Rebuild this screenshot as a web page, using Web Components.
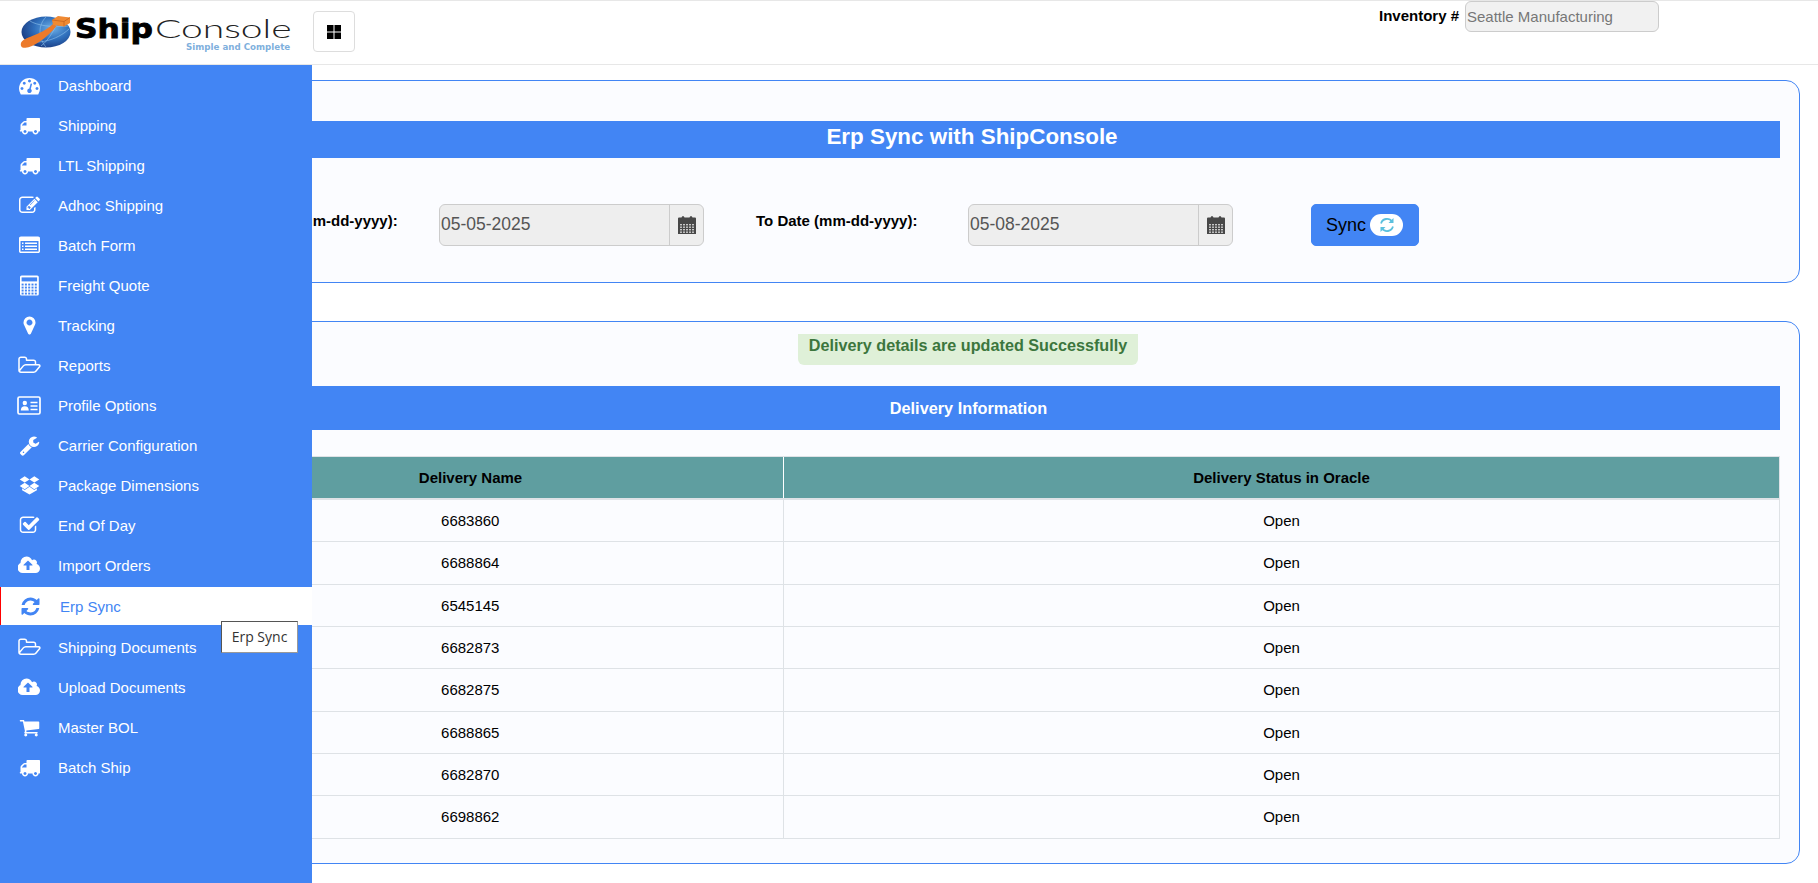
<!DOCTYPE html>
<html>
<head>
<meta charset="utf-8">
<title>ShipConsole</title>
<style>
html,body{margin:0;padding:0;height:100%;background:#fff;font-family:"Liberation Sans",Arial,sans-serif;color:#000;}
</style>
</head>
<body>
<sc-app>
  <sc-header slot="header"></sc-header>
  <sc-sidebar slot="sidebar">
    <sc-nav-item icon="dashboard">Dashboard</sc-nav-item>
    <sc-nav-item icon="truck">Shipping</sc-nav-item>
    <sc-nav-item icon="truck">LTL Shipping</sc-nav-item>
    <sc-nav-item icon="edit">Adhoc Shipping</sc-nav-item>
    <sc-nav-item icon="listalt">Batch Form</sc-nav-item>
    <sc-nav-item icon="calculator">Freight Quote</sc-nav-item>
    <sc-nav-item icon="marker">Tracking</sc-nav-item>
    <sc-nav-item icon="folder">Reports</sc-nav-item>
    <sc-nav-item icon="idcard">Profile Options</sc-nav-item>
    <sc-nav-item icon="wrench">Carrier Configuration</sc-nav-item>
    <sc-nav-item icon="dropbox">Package Dimensions</sc-nav-item>
    <sc-nav-item icon="check">End Of Day</sc-nav-item>
    <sc-nav-item icon="cloud">Import Orders</sc-nav-item>
    <sc-nav-item icon="refresh" active tip="Erp Sync">Erp Sync</sc-nav-item>
    <sc-nav-item icon="folder">Shipping Documents</sc-nav-item>
    <sc-nav-item icon="cloud">Upload Documents</sc-nav-item>
    <sc-nav-item icon="cart">Master BOL</sc-nav-item>
    <sc-nav-item icon="truck">Batch Ship</sc-nav-item>
  </sc-sidebar>
  <sc-sync-card></sc-sync-card>
  <sc-delivery-card></sc-delivery-card>
</sc-app>

<script>
const FA = {
  dashboard:['0 0 1792 1792','M384 1152q0-53-37.5-90.5t-90.5-37.5-90.5 37.5-37.5 90.5 37.5 90.5 90.5 37.5 90.5-37.5 37.5-90.5zm192-448q0-53-37.5-90.5t-90.5-37.5-90.5 37.5-37.5 90.5 37.5 90.5 90.5 37.5 90.5-37.5 37.5-90.5zm428 481l101-382q6-26-7.5-48.5t-38.5-29.5-48 6.5-30 39.5l-101 382q-60 5-107 43.5t-63 98.5q-20 77 20 146t117 89 146-20 89-117q16-60-6-117t-72-91zm660-33q0-53-37.5-90.5t-90.5-37.5-90.5 37.5-37.5 90.5 37.5 90.5 90.5 37.5 90.5-37.5 37.5-90.5zm-640-640q0-53-37.5-90.5t-90.5-37.5-90.5 37.5-37.5 90.5 37.5 90.5 90.5 37.5 90.5-37.5 37.5-90.5zm448 192q0-53-37.5-90.5t-90.5-37.5-90.5 37.5-37.5 90.5 37.5 90.5 90.5 37.5 90.5-37.5 37.5-90.5zm320 448q0 261-141 483-19 29-54 29h-1402q-35 0-54-29-141-221-141-483 0-182 71-348t191-286 286-191 348-71 348 71 286 191 191 286 71 348z'],
  truck:['0 0 1792 1792','M640 1408q0-52-38-90t-90-38-90 38-38 90 38 90 90 38 90-38 38-90zm-384-512h384v-256h-158q-13 0-22 9l-195 195q-9 9-9 22v30zm1280 512q0-52-38-90t-90-38-90 38-38 90 38 90 90 38 90-38 38-90zm256-1088v1024q0 15-4 26.5t-13.5 18.5-16.5 11.5-23.5 6-22.5 2-25.5 0-22.5-.5q0 106-75 181t-181 75-181-75-75-181h-384q0 106-75 181t-181 75-181-75-75-181h-64q-3 0-22.5.5t-25.5 0-22.5-2-23.5-6-16.5-11.5-13.5-18.5-4-26.5q0-26 19-45t45-19v-320q0-8-.5-35t0-38 2.5-34.5 6.5-37 14-30.5 22.5-30l198-198q19-19 50.5-32t58.5-13h160v-192q0-26 19-45t45-19h1024q26 0 45 19t19 45z'],
  edit:['0 0 1792 1792','M888 1184l116-116-152-152-116 116v56h96v96h56zm440-720q-16-16-33 1l-350 350q-17 17-1 33t33-1l350-350q17-17 1-33zm80 594v190q0 119-84.5 203.5t-203.5 84.5h-832q-119 0-203.5-84.5t-84.5-203.5v-832q0-119 84.5-203.5t203.5-84.5h832q63 0 117 25 15 7 18 23 3 17-9 29l-49 49q-14 14-32 8-23-6-45-6h-832q-66 0-113 47t-47 113v832q0 66 47 113t113 47h832q66 0 113-47t47-113v-126q0-13 9-22l64-64q15-15 35-7t20 29zm-96-738l288 288-672 672h-288v-288zm444 132l-92 92-288-288 92-92q28-28 68-28t68 28l152 152q28 28 28 68t-28 68z'],
  listalt:['0 0 1792 1792','M384 1184v64q0 13-9.5 22.5t-22.5 9.5h-64q-13 0-22.5-9.5t-9.5-22.5v-64q0-13 9.5-22.5t22.5-9.5h64q13 0 22.5 9.5t9.5 22.5zm0-256v64q0 13-9.5 22.5t-22.5 9.5h-64q-13 0-22.5-9.5t-9.5-22.5v-64q0-13 9.5-22.5t22.5-9.5h64q13 0 22.5 9.5t9.5 22.5zm0-256v64q0 13-9.5 22.5t-22.5 9.5h-64q-13 0-22.5-9.5t-9.5-22.5v-64q0-13 9.5-22.5t22.5-9.5h64q13 0 22.5 9.5t9.5 22.5zm1152 512v64q0 13-9.5 22.5t-22.5 9.5h-960q-13 0-22.5-9.5t-9.5-22.5v-64q0-13 9.5-22.5t22.5-9.5h960q13 0 22.5 9.5t9.5 22.5zm0-256v64q0 13-9.5 22.5t-22.5 9.5h-960q-13 0-22.5-9.5t-9.5-22.5v-64q0-13 9.5-22.5t22.5-9.5h960q13 0 22.5 9.5t9.5 22.5zm0-256v64q0 13-9.5 22.5t-22.5 9.5h-960q-13 0-22.5-9.5t-9.5-22.5v-64q0-13 9.5-22.5t22.5-9.5h960q13 0 22.5 9.5t9.5 22.5zm128 704v-832q0-13-9.5-22.5t-22.5-9.5h-1472q-13 0-22.5 9.5t-9.5 22.5v832q0 13 9.5 22.5t22.5 9.5h1472q13 0 22.5-9.5t9.5-22.5zm128-1088v1088q0 66-47 113t-113 47h-1472q-66 0-113-47t-47-113v-1088q0-66 47-113t113-47h1472q66 0 113 47t47 113z'],
  marker:['0 0 1792 1792','M1152 640q0-106-75-181t-181-75-181 75-75 181 75 181 181 75 181-75 75-181zm256 0q0 109-33 179l-364 774q-16 33-47.5 52t-67.5 19-67.5-19-46.5-52l-365-774q-33-70-33-179 0-212 150-362t362-150 362 150 150 362z'],
  folder:['0 0 1920 1792','M1781 931q0-35-53-35h-1088q-40 0-85.5 21.5t-71.5 52.5l-294 363q-18 24-18 40 0 35 53 35h1088q40 0 86-22t71-53l294-363q18-22 18-39zm-1141-163h768v-160q0-40-28-68t-68-28h-576q-40 0-68-28t-28-68v-64q0-40-28-68t-68-28h-320q-40 0-68 28t-28 68v853l256-315q44-53 116-87.5t140-34.5zm1269 163q0 62-46 120l-295 363q-43 53-116 87.5t-140 34.5h-1088q-92 0-158-66t-66-158v-960q0-92 66-158t158-66h320q92 0 158 66t66 158v32h544q92 0 158 66t66 158v160h192q54 0 99 24.5t67 70.5q15 32 15 68z'],
  wrench:['0 0 1792 1792','M448 1472q0-26-19-45t-45-19-45 19-19 45 19 45 45 19 45-19 19-45zm644-420l-682 682q-37 37-90 37-52 0-91-37l-106-108q-38-36-38-90 0-53 38-91l681-681q39 98 114.5 173.5t173.5 114.5zm634-435q0 39-23 106-47 134-164.5 217.5t-258.5 83.5q-185 0-316.5-131.5t-131.5-316.5 131.5-316.5 316.5-131.5q58 0 121.5 16.5t107.5 46.5q16 11 16 28t-16 28l-293 169v224l193 107q5-3 79-48.5t135.5-81 70.5-35.5q15 0 23.5 10t8.5 25z'],
  check:['0 0 1792 1792','M1472 930v318q0 119-84.5 203.5t-203.5 84.5h-832q-119 0-203.5-84.5t-84.5-203.5v-832q0-119 84.5-203.5t203.5-84.5h832q63 0 117 25 15 7 18 23 3 17-9 29l-49 49q-10 10-23 10-3 0-9-2-23-6-45-6h-832q-66 0-113 47t-47 113v832q0 66 47 113t113 47h832q66 0 113-47t47-113v-254q0-13 9-22l64-64q10-10 23-10 6 0 12 3 20 8 20 29zm231-489l-814 814q-24 24-57 24t-57-24l-430-430q-24-24-24-57t24-57l110-110q24-24 57-24t57 24l263 263 647-647q24-24 57-24t57 24l110 110q24 24 24 57t-24 57z'],
  cloud:['0 0 1920 1792','M1216 864q0-14-9-23l-352-352q-9-9-23-9t-23 9l-351 351q-10 12-10 24 0 14 9 23t23 9h224v352q0 13 9.5 22.5t22.5 9.5h192q13 0 22.5-9.5t9.5-22.5v-352h224q13 0 22.5-9.5t9.5-22.5zm640 288q0 159-112.5 271.5t-271.5 112.5h-1088q-185 0-316.5-131.5t-131.5-316.5q0-130 70-240t188-165q-2-30-2-43 0-212 150-362t362-150q156 0 285.5 87t188.5 231q71-62 166-62 106 0 181 75t75 181q0 76-41 138 130 31 213.5 135.5t83.5 238.5z'],
  refresh:['0 0 1792 1792','M1639 1056q0 5-1 7-64 268-268 434.5t-478 166.5q-146 0-282.5-55t-243.5-157l-129 129q-19 19-45 19t-45-19-19-45v-448q0-26 19-45t45-19h448q26 0 45 19t19 45-19 45l-137 137q71 66 161 102t187 36q134 0 250-65t186-179q11-17 53-117 8-23 30-23h192q13 0 22.5 9.5t9.5 22.5zm25-800v448q0 26-19 45t-45 19h-448q-26 0-45-19t-19-45 19-45l138-138q-148-137-349-137-134 0-250 65t-186 179q-11 17-53 117-8 23-30 23h-199q-13 0-22.5-9.5t-9.5-22.5v-7q65-268 270-434.5t480-166.5q146 0 284 55.5t245 156.5l130-129q19-19 45-19t45 19 19 45z'],
  cart:['0 0 1792 1792','M704 1536q0 52-38 90t-90 38-90-38-38-90 38-90 90-38 90 38 38 90zm896 0q0 52-38 90t-90 38-90-38-38-90 38-90 90-38 90 38 38 90zm128-1088v512q0 24-16.5 42.5t-40.5 21.5l-1044 122q13 60 13 70 0 16-24 64h920q26 0 45 19t19 45-19 45-45 19h-1024q-26 0-45-19t-19-45q0-11 8-31.5t16-36 21.5-40 15.5-29.5l-177-823h-204q-26 0-45-19t-19-45 19-45 45-19h256q16 0 28.5 6.5t19.5 15.5 13 24.5 8 26 5.5 29.5 4.5 26h1201q26 0 45 19t19 45z']
}

function faIcon(name, w, h){
  const [box, d] = FA[name]
  return `<svg width="${w}" height="${h}" viewBox="${box}" fill="currentColor" aria-hidden="true"><path d="${d}"/></svg>`
}

function calculatorIcon(){
  let keys = ''
  for(let r = 0; r < 4; r++){
    for(let c = 0; c < 5; c++){
      keys += `<rect x="${2.6 + c*3.3}" y="${8.6 + r*3}" width="2" height="1.9" fill="#4285f4"/>`
    }
  }
  return `<svg width="21" height="21" viewBox="0 0 21 21" aria-hidden="true"><rect x="1" y="0.5" width="18.8" height="20" rx="1.6" fill="#fff"/><rect x="2.6" y="2.4" width="15.5" height="4" fill="#4285f4"/>${keys}</svg>`
}

function idCardIcon(){
  return `<svg width="24" height="19" viewBox="0 0 24 19" aria-hidden="true"><rect x="1" y="1" width="22" height="17" rx="1.5" fill="none" stroke="#fff" stroke-width="1.7"/><circle cx="7.8" cy="7" r="2.2" fill="#fff"/><path d="M3.8 14.6c0-3 1.4-4.4 4-4.4s4 1.4 4 4.4z" fill="#fff"/><path d="M13.5 6.5h7M13.5 10h7M13.5 13.5h7" stroke="#fff" stroke-width="1.3"/></svg>`
}

function dropboxIcon(){
  return `<svg width="21" height="21" viewBox="0 0 21 21" fill="#fff" aria-hidden="true"><path d="M5.7 1.2l4.8 3.2-4.8 3.2L.7 4.4zM15.3 1.2l5 3.2-5 3.2-4.8-3.2zM5.7 7.8l4.8 3.2-4.8 3.2L.7 11zM15.3 7.800l5 3.2-5 3.2-4.8-3.2zM10.5 11.8l4.8 3.1 2.6-1.6v1.9l-7.4 4.4-7.4-4.4v-1.9l2.6 1.6z"/></svg>`
}

function calendarIcon(){
  let dots = ''
  for(let r = 0; r < 4; r++){
    for(let c = 0; c < 5; c++){
      dots += `<rect x="${2 + c*3}" y="${8 + r*2.5}" width="2" height="1.4" fill="#c9c9c9"/>`
    }
  }
  return `<svg width="18" height="18" viewBox="0 0 18 18" aria-hidden="true"><path d="M0 2.5q0-1 1-1h2.5q.5-1.5 1.5-1.5t1.5 1.5h5q.5-1.5 1.5-1.5t1.5 1.5H17q1 0 1 1V18H0z" fill="#484848"/>${dots}</svg>`
}

function thinSyncIcon(){
  return `<svg width="18" height="18" viewBox="0 0 20 20" fill="none" stroke="#5bc0de" stroke-width="2" aria-hidden="true"><g><path d="M15.6 6.3A6.800 6.800 0 0 0 3.4 8.2"/><path d="M17.2 2.2v5.5h-5.500z" fill="#5bc0de" stroke="none"/></g><g transform="rotate(180 10 10)"><path d="M15.6 6.3A6.800 6.800 0 0 0 3.4 8.2"/><path d="M17.2 2.2v5.5h-5.500z" fill="#5bc0de" stroke="none"/></g></svg>`
}

function navIcon(name){
  if(name == 'calculator') return calculatorIcon()
  if(name == 'idcard') return idCardIcon()
  if(name == 'dropbox') return dropboxIcon()
  if(name == 'folder' || name == 'cloud') return faIcon(name, 23, 21)
  return faIcon(name, 21, 21)
}

window.customElements.define('sc-app', class extends HTMLElement {
  constructor(){
    super()
    this.attachShadow({mode:'open'})
  }
  connectedCallback(){
    this.shadowRoot.innerHTML = `
    <style>
      :host{display:block;position:relative;height:883px;overflow:hidden;background:#fff;}
      .main{display:flex;flex-direction:column;gap:38px;padding:15px 18px 0 140px;}
      ::slotted(sc-sidebar){position:absolute;top:65px;left:0;bottom:0;width:312px;}
    </style>
    <slot name="header"></slot>
    <slot name="sidebar"></slot>
    <div class="main"><slot></slot></div>
    `
  }
})

window.customElements.define('sc-logo', class extends HTMLElement {
  constructor(){
    super()
    this.attachShadow({mode:'open'})
  }
  connectedCallback(){
    this.shadowRoot.innerHTML = `
    <style>
      :host{display:block;position:relative;width:272px;height:40px;}
      svg{position:absolute;left:0;top:0;}
      .ship,.console{position:absolute;white-space:nowrap;transform-origin:0 50%;}
      .ship{left:55px;top:2px;font:700 27px/26px "DejaVu Sans",sans-serif;color:#000;-webkit-text-stroke:.8px #000;transform:scaleX(1.16);}
      .console{left:135px;top:1px;font:300 26px/26px Lato,sans-serif;color:#222;transform:scaleX(1.5);}
      small{position:absolute;left:166px;top:29px;white-space:nowrap;font:700 8.7px/9px "DejaVu Sans",sans-serif;color:#7fb0dd;}
    </style>
    <svg width="54" height="40" viewBox="0 0 54 40" aria-hidden="true">
      <defs>
        <radialGradient id="gl" cx="62%" cy="38%" r="65%">
          <stop offset="0" stop-color="#6fb0e6"/>
          <stop offset=".55" stop-color="#2f6fbc"/>
          <stop offset="1" stop-color="#1c3f85"/>
        </radialGradient>
      </defs>
      <ellipse cx="26" cy="18" rx="24.5" ry="15.5" fill="url(#gl)"/>
      <path d="M6 27C18 30 36 27 49 15M26 3c-8 8-8 21 0 30M39 5c-4 9-9 20-18 27M10 7c6 4 22 7 38 5" fill="none" stroke="#8fc2ec" stroke-width=".6"/>
      <path d="M1 29C3 23 20 22 33 10l3.5 2C26 25 13 33 5.5 33.8 2 34.2 .2 32.5 1 29z" fill="#ec7a2a"/>
      <path d="M32 6l6-4 12 1.5V9l-6 3.5L33 11z" fill="#f08a33"/>
      <path d="M32 6l12 1.5v5M44 7.5L50 3.5" fill="none" stroke="#c8651e" stroke-width=".8"/>
    </svg>
    <span class="ship">Ship</span>
    <span class="console">Console</span>
    <small>Simple and Complete</small>
    `
  }
})

window.customElements.define('sc-header', class extends HTMLElement {
  constructor(){
    super()
    this.attachShadow({mode:'open'})
  }
  connectedCallback(){
    this.shadowRoot.innerHTML = `
    <style>
      :host{display:flex;box-sizing:border-box;height:65px;border-top:1px solid #e7e7e7;border-bottom:1px solid #e7e7e7;background:#fff;padding-right:159px;}
      sc-logo{margin:13px 0 0 20px;}
      button{box-sizing:border-box;width:42px;height:41px;margin:10px 0 0 21px;padding:0;background:#fff;border:1px solid #ddd;border-radius:4px;display:flex;align-items:center;justify-content:center;color:#000;}
      .inv{margin-left:auto;display:flex;align-items:flex-start;gap:6px;font:700 15px "Liberation Sans",Arial,sans-serif;}
      .inv label{line-height:29px;}
      .inv div{box-sizing:border-box;width:194px;height:31px;background:#f1f1f1;border:1px solid #ccc;border-radius:6px;padding:0 1px;font:400 15px/30px "Liberation Sans",Arial,sans-serif;color:#777;}
    </style>
    <sc-logo></sc-logo>
    <button aria-label="menu"><svg width="14" height="14" viewBox="0 0 14 14" fill="currentColor"><rect width="6.5" height="6.5"/><rect x="7.5" width="6.5" height="6.5"/><rect y="7.5" width="6.5" height="6.5"/><rect x="7.5" y="7.5" width="6.5" height="6.5"/></svg></button>
    <div class="inv"><label>Inventory #</label><div>Seattle Manufacturing</div></div>
    `
  }
})

window.customElements.define('sc-sidebar', class extends HTMLElement {
  constructor(){
    super()
    this.attachShadow({mode:'open'})
  }
  connectedCallback(){
    this.shadowRoot.innerHTML = `
    <style>
      :host{display:block;background:#4285f4;box-sizing:border-box;z-index:5;}
    </style>
    <slot></slot>
    `
  }
})

window.customElements.define('sc-nav-item', class extends HTMLElement {
  constructor(){
    super()
    this.attachShadow({mode:'open'})
  }
  connectedCallback(){
    const tip = this.getAttribute('tip')
    this.shadowRoot.innerHTML = `
    <style>
      :host{display:block;position:relative;height:40px;color:#fff;font:400 15px "Liberation Sans",Arial,sans-serif;}
      .row{display:flex;align-items:center;height:40px;box-sizing:border-box;}
      .ico{width:24px;margin-left:17px;margin-right:17px;display:flex;justify-content:center;align-items:center;height:24px;}
      :host([active]) .row{height:38px;margin-top:2px;background:#fff;color:#4285f4;border-left:1px solid #f00;}
      :host([active]) .ico{margin-left:17px;margin-right:18px;}
      .tip{position:absolute;left:221px;top:34px;box-sizing:border-box;width:77px;height:32px;background:#fff;border:1px solid #555;border-right-color:#999;border-bottom-color:#999;color:#333;font:400 14px/30px "Open Sans",sans-serif;text-align:center;white-space:nowrap;z-index:6;}
    </style>
    <div class="row"><span class="ico">${navIcon(this.getAttribute('icon'))}</span><slot></slot></div>
    ${tip ? `<div class="tip">${tip}</div>` : ''}
    `
  }
})

window.customElements.define('sc-date-field', class extends HTMLElement {
  static get observedAttributes(){
    return ['value']
  }
  constructor(){
    super()
    this.attachShadow({mode:'open'})
  }
  attributeChangedCallback(attr, oldVal, newVal){
    this.value = newVal
  }
  connectedCallback(){
    this.shadowRoot.innerHTML = `
    <style>
      :host{display:flex;box-sizing:border-box;height:42px;background:#eee;border:1px solid #ccc;border-radius:6px;color:#555;font:400 17.5px "Liberation Sans",Arial,sans-serif;}
      .val{flex:1;line-height:38px;padding-left:1px;}
      .add{width:33px;border-left:1px solid #ccc;display:flex;align-items:center;justify-content:center;}
    </style>
    <div class="val">${this.value}</div>
    <div class="add">${calendarIcon()}</div>
    `
  }
})

window.customElements.define('sc-card', class extends HTMLElement {
  constructor(){
    super()
    this.attachShadow({mode:'open'})
  }
  connectedCallback(){
    this.shadowRoot.innerHTML = `
    <style>
      :host{display:block;box-sizing:border-box;background:#fbfcff;border:1px solid #4285f4;border-radius:14px;}
    </style>
    <slot></slot>
    `
  }
})

window.customElements.define('sc-sync-card', class extends HTMLElement {
  constructor(){
    super()
    this.attachShadow({mode:'open'})
  }
  connectedCallback(){
    this.shadowRoot.innerHTML = `
    <style>
      :host{display:block;}
      sc-card{height:203px;padding-top:40px;}
      h2{margin:0 19px 0 23px;height:37px;background:#4285f4;color:#fff;font:700 22.4px/32px "Liberation Sans",Arial,sans-serif;text-align:center;}
      .form{display:grid;grid-template-columns:223px 265px 52px 212px 265px 78px 108px;margin:46px 0 0 75px;}
      label{font:700 15px "Liberation Sans",Arial,sans-serif;line-height:33px;white-space:nowrap;}
      button{box-sizing:border-box;height:42px;background:#4285f4;border:1px solid #4285f4;border-radius:5px;color:#000;font:400 18px "Liberation Sans",Arial,sans-serif;padding:0 0 0 14px;display:flex;align-items:center;gap:4px;grid-column:7;}
      button i{width:33px;height:22px;border-radius:11px;background:#fff;display:flex;align-items:center;justify-content:center;}
    </style>
    <sc-card>
      <h2>Erp Sync with ShipConsole</h2>
      <div class="form">
        <label>From Date (mm-dd-yyyy):</label>
        <sc-date-field value="05-05-2025"></sc-date-field>
        <span></span>
        <label>To Date (mm-dd-yyyy):</label>
        <sc-date-field value="05-08-2025"></sc-date-field>
        <span></span>
        <button>Sync <i>${thinSyncIcon()}</i></button>
      </div>
    </sc-card>
    `
  }
})

window.customElements.define('sc-delivery-card', class extends HTMLElement {
  constructor(){
    super()
    this.attachShadow({mode:'open'})
  }
  connectedCallback(){
    const rows = ['6683860','6688864','6545145','6682873','6682875','6688865','6682870','6698862']
    this.shadowRoot.innerHTML = `
    <style>
      :host{display:block;}
      sc-card{height:543px;padding-top:12px;}
      .alert{box-sizing:border-box;width:340px;height:31px;margin:0 auto;background:#dff0d8;color:#3c763d;border-radius:0 0 6px 6px;text-align:center;font:700 16.2px/23px "Liberation Sans",Arial,sans-serif;transform:translateX(-2px);}
      h3{margin:21px 19px 0 16px;height:44px;background:#4285f4;color:#fff;font:700 16.3px/44px "Liberation Sans",Arial,sans-serif;text-align:center;}
      table{margin:26px 18px 0 16px;width:1623px;border-collapse:collapse;table-layout:fixed;font:400 15px "Liberation Sans",Arial,sans-serif;}
      th{background:#5f9ea0;height:41px;font-weight:700;border-top:1px solid #dee2e6;border-bottom:2px solid #dee2e6;border-left:1px solid #dee2e6;padding:0;}
      th + th{border-left:1px solid #fff;border-right:1px solid #dee2e6;}
      td{height:41.33px;padding:0;text-align:center;border:1px solid #dee2e6;}
      td:first-child{border-left:none;}
    </style>
    <sc-card>
      <div class="alert">Delivery details are updated Successfully</div>
      <h3>Delivery Information</h3>
      <table>
        <colgroup><col style="width:626px"><col></colgroup>
        <tr><th>Delivery Name</th><th>Delivery Status in Oracle</th></tr>
        ${rows.map(r => `<tr><td>${r}</td><td>Open</td></tr>`).join('')}
      </table>
    </sc-card>
    `
  }
})
</script>
</body>
</html>
